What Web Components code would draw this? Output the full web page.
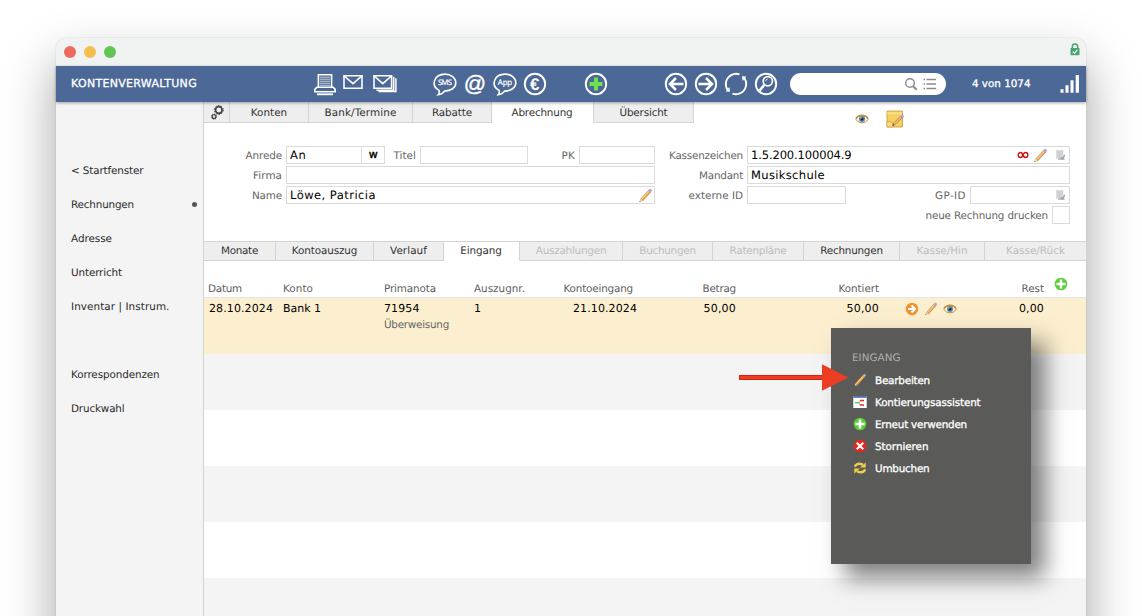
<!DOCTYPE html>
<html lang="de">
<head>
<meta charset="utf-8">
<title>Kontenverwaltung</title>
<style>
  html, body { margin: 0; height: 616px; overflow: hidden; background: #fff; }
  body { position: relative; font-family: "DejaVu Sans", Verdana, sans-serif; font-size: 10.4px; color: #333; text-rendering: geometricPrecision; }
  app-window { margin: 38px 56px 0; }
</style>
</head>
<body>
<app-window>
  <tool-bar slot="toolbar"></tool-bar>
  <side-nav slot="nav"></side-nav>
  <tab-strip kind="top">
    <tab-item w="25"><ui-icon name="gears" width="16" height="16"></ui-icon></tab-item>
    <tab-item w="78"><fit-text w="36.5">Konten</fit-text></tab-item>
    <tab-item w="103"><fit-text w="72">Bank/Termine</fit-text></tab-item>
    <tab-item w="78"><fit-text w="40">Rabatte</fit-text></tab-item>
    <tab-item w="101" active><fit-text w="61">Abrechnung</fit-text></tab-item>
    <tab-item w="99"><fit-text w="48">Übersicht</fit-text></tab-item>
  </tab-strip>
  <account-form></account-form>
  <tab-strip kind="sub">
    <tab-item w="71"><fit-text w="37">Monate</fit-text></tab-item>
    <tab-item w="97"><fit-text w="65.5">Kontoauszug</fit-text></tab-item>
    <tab-item w="69"><fit-text w="37">Verlauf</fit-text></tab-item>
    <tab-item w="75" active><fit-text w="41.5">Eingang</fit-text></tab-item>
    <tab-item w="102" disabled><fit-text w="70.5">Auszahlungen</fit-text></tab-item>
    <tab-item w="89" disabled><fit-text w="56.5">Buchungen</fit-text></tab-item>
    <tab-item w="90" disabled><fit-text w="57">Ratenpläne</fit-text></tab-item>
    <tab-item w="95"><fit-text w="62.5">Rechnungen</fit-text></tab-item>
    <tab-item w="84" disabled><fit-text w="51">Kasse/Hin</fit-text></tab-item>
    <tab-item w="101" disabled><fit-text w="59">Kasse/Rück</fit-text></tab-item>
  </tab-strip>
  <payment-table></payment-table>
</app-window>
<context-menu></context-menu>
<pointer-arrow></pointer-arrow>

<script>
const PENCIL = `
  <path d="M2.6 11.2 10.6 2.4l2 1.8-8 8.8z" fill="#f0a850" stroke="#a87838" stroke-width=".6"/>
  <path d="M3.6 11.4 11.2 3" stroke="#ffdc9c" stroke-width=".9"/>
  <path d="M10.4 2.6 11.8 1q1.6-.2 2.1 1.6l-1.4 1.8z" fill="#c9a6cf" stroke="#9b86a8" stroke-width=".4"/>
  <path d="M2.6 11.2 1.4 14l3.2-1z" fill="#e8cfa0"/><path d="m1.4 14 .4-1.2.9.8z" fill="#443"/>`;

const BUBBLE = `<path d="M6 18.4C-2.6 13.4 1 2.2 12 2.1c6 0 10.8 3.6 10.8 8.6S18 19 11.6 19.1c-1.4 2-3.6 3.4-6.4 3.7 1.2-1.4 1.4-3 .8-4.4z" fill="none" stroke="#fff" stroke-width="1.6"/>`;

// every icon carries its own viewBox and drawing
const ICONS = {
  printer: ['0 0 24 24', `<g fill="none" stroke="#fff" stroke-width="1.6">
    <path d="M5.4 15V2.8h13.2V15"/><path d="M3.8 15.2h16.4l2 2.2v2.4H1.8v-2.4z" fill="#4c6896"/>
    <path d="M4 22.3h16" stroke-width="1.8"/><path d="M7 5.3h10M7 7.3h10M7 9.3h10M7 11.3h10M7 13.3h10" stroke-width="1.1" opacity=".65"/></g>`],
  mail: ['0 0 20 24', `<g fill="none" stroke="#fff" stroke-width="1.6"><path d="M1 3.7h18v12.6H1z"/><path d="m1.2 4 8.8 7.600L18.800 4"/></g>`],
  mails: ['0 0 24 24', `<g fill="none" stroke="#fff" stroke-width="1.6"><path d="M1 3.7h17.600v12.600H1z"/><path d="m1.200 4 8.600 7.600L18.400 4"/>
    <path d="M20.700 4.800v13.400H3.500M22.900 6.200v13.400H5.500" stroke-width="1.500"/></g>`],
  sms: ['0 0 24 24', `${BUBBLE}
    <text x="12" y="13.300" font-family="Open Sans" font-size="7.600" textLength="14" stroke="#fff" stroke-width=".2" fill="#fff" text-anchor="middle">SMS</text>`],
  at: ['0 0 24 24', `<text x="12" y="18.600" font-family="Liberation Sans" font-size="22" fill="#fff" stroke="#fff" stroke-width=".4" text-anchor="middle">@</text>`],
  app: ['0 0 24 24', `${BUBBLE}
    <text x="12" y="13" font-family="Open Sans" font-size="8" textLength="14.500" stroke="#fff" stroke-width=".2" fill="#fff" text-anchor="middle">App</text>`],
  euro: ['0 0 24 24', `<circle cx="12" cy="12" r="10.200" fill="none" stroke="#fff" stroke-width="1.900"/>
    <text x="11.700" y="18" font-family="Liberation Sans" font-weight="bold" font-size="17" fill="#fff" text-anchor="middle">€</text>`],
  add: ['0 0 24 24', `<circle cx="12" cy="12" r="10.200" fill="none" stroke="#fff" stroke-width="1.900"/><path d="M12 5.500v13M5.500 12h13" stroke="#6ee04c" stroke-width="4"/>`],
  back: ['0 0 24 24', `<g fill="none" stroke="#fff"><circle cx="12" cy="12" r="10.200" stroke-width="1.900"/><path d="M19.500 12H5.500m6.500-6-6 6 6 6" stroke-width="2.500"/></g>`],
  forward: ['0 0 24 24', `<g fill="none" stroke="#fff"><circle cx="12" cy="12" r="10.200" stroke-width="1.900"/><path d="M4.500 12h14m-6.500-6 6 6-6 6" stroke-width="2.500"/></g>`],
  reload: ['0 0 24 24', `<g fill="none" stroke="#fff" stroke-width="1.900"><path d="M3.800 18A10.200 10.200 0 0 1 9 2.300M8.500 21.600a10.200 10.200 0 0 0 7 0M20.200 6A10.200 10.200 0 0 1 15 21.700M15.500 2.400a10.200 10.200 0 0 0-7 0"/></g>
    <path d="M1.600 19.600 6 19.800 5.400 15zM22.400 4.400 18 4.200 18.600 9z" fill="#fff"/>`],
  find: ['0 0 24 24', `<g fill="none" stroke="#fff"><circle cx="12" cy="12" r="10.200" stroke-width="1.900"/><circle cx="13.800" cy="9.200" r="4.600" stroke-width="1.700"/><path d="m10.600 12.500-5 6" stroke-width="2.600"/><path d="M11.600 9.200q.2-2 2.200-2.200" stroke-width=".8"/></g>`],
  lens: ['0 0 14 14', `<g fill="none" stroke="#8c8c8c"><circle cx="6" cy="6" r="4.300" stroke-width="1.500"/><path d="m9.100 9.200 3.600 3.600" stroke-width="2"/></g>`],
  list: ['0 0 14 12', `<path d="M3.500 1.500H13M3.500 6H13M3.500 10.500H13M.5 1.500h1.600M.5 6h1.600M.5 10.500h1.600" stroke="#8c8c8c" stroke-width="1.400"/>`],
  signal: ['0 0 20 20', `<path d="M.5 15.300h3v3.500h-3zM5.500 11.300h3v7.500h-3zM10.500 6.300h3v12.500h-3zM15.700 1h3.200v17.800h-3.200z" fill="#fff"/>`],
  lock: ['0 0 10 13', `<path d="M2.300 6V3.800a2.700 2.700 0 0 1 5.400 0V6" fill="none" stroke="#4aa674" stroke-width="1.500"/><rect x=".5" y="5" width="9" height="7.300" rx=".6" fill="#4aa674"/><path d="m2.700 8.700 1.700 1.600 3-3.500" fill="none" stroke="#fff" stroke-width="1.100"/>`],
  gears: ['0 0 16 16', `<g fill="none" stroke="#444"><circle cx="9.800" cy="6" r="3.300" stroke-width="1.700"/><circle cx="9.800" cy="6" r="4.500" stroke-width="1" stroke-dasharray="1.500 1.330"/>
    <circle cx="5" cy="12.600" r="1.900" stroke-width="1.300"/><circle cx="5" cy="12.600" r="2.700" stroke-width=".7" stroke-dasharray="1 1.120"/></g>`],
  pencil: ['0 0 15 15', PENCIL],
  eye: ['0 0 14 10', `<path d="M.7 5.300Q3 1.700 7 1.700t6.300 3.600Q11 8.900 7 8.900T.7 5.300z" fill="#f4f1e4" stroke="#b3873c" stroke-width=".9"/><path d="M.8 4.600Q3 1.200 7 1.200t6.200 3.400" fill="none" stroke="#c28d35" stroke-width="1.300"/>
    <circle cx="7" cy="5.100" r="3" fill="#5d87a5"/><circle cx="7" cy="5.100" r="1.500" fill="#152330"/><circle cx="6" cy="4" r=".7" fill="#dcecf6"/>`],
  note: ['0 0 18 18', `<path d="M1 1h15.500v16H1z" fill="#f6cf5c" stroke="#c39b45" stroke-width=".8"/><path d="M1.500 2h14.500v2.500H1.500z" fill="#fadc82"/><path d="M1 11.500q3.500-.5 5 1T7 17H1z" fill="#f9dd83" stroke="#cf9c3a" stroke-width=".7"/>
    <path d="m7.500 14.600 7.800-7.400" stroke="#9c6a32" stroke-width="2.400"/><path d="m7.700 14.300 7.500-7.100" stroke="#f1b878" stroke-width="1.600"/><path d="m15 7.500 2.300-2" stroke="#a99ac8" stroke-width="2.500"/><path d="m6 16 2.500-.8-1.500-1.600z" fill="#7a5130"/>`],
  infinity: ['0 0 12 8', `<g fill="none" stroke="#c4161c" stroke-width="1.400"><ellipse cx="3.400" cy="4" rx="2.200" ry="2.500"/><ellipse cx="8.600" cy="4" rx="2.200" ry="2.500"/></g>`],
  record: ['0 0 11 12', `<path d="M1 .8h7.500v9H1z" fill="#dedede"/><path d="M1.800 3h6M1.800 5h6M1.800 7h6" stroke="#c2c2c2"/><path d="M3 8.400h6.500V11H3z" fill="#c0c3c6"/><path d="m6 8.600 1.500 1.400 2.400-4.200" fill="none" stroke="#8fa2b6" stroke-width="1.300"/>`],
  go: ['0 0 14 14', `<circle cx="7" cy="7" r="6.200" fill="#ee9330"/><path d="M3 7h6.500M6.500 3.500 10 7l-3.500 3.500" fill="none" stroke="#fff" stroke-width="2.100"/>`],
  plus: ['0 0 14 14', `<circle cx="7" cy="7" r="6.300" fill="#58cf35"/><path d="M7 2.500v9M2.500 7h9" stroke="#fff" stroke-width="2.500"/>`],
  assist: ['0 0 14 14', `<path d="M.3 1h13.400v12H.3z" fill="#fff"/><path d="M.3 1h13.400v1.900H.3z" fill="#4e76b5"/><path d="M2 7.700h4" stroke="#37d13b" stroke-width="1.300"/><path d="M7 5.600h4M7 9.900h4" stroke="#e82323" stroke-width="1.500"/><path d="M6.500 5.600v4.400" stroke="#e82323" stroke-width=".4"/>`],
  cancel: ['0 0 14 14', `<circle cx="7" cy="7" r="6.400" fill="#e5281f"/><path d="m3.800 3.800 6.400 6.400m0-6.400-6.400 6.400" stroke="#fff" stroke-width="2.100"/>`],
  rebook: ['0 0 14 14', `<g fill="none" stroke="#ecd04c" stroke-width="2.400"><path d="M1.700 5.600Q4.500 .8 10 3.800"/><path d="M12.300 8.400Q9.500 13.200 4 10.200"/></g><path d="M12.700 1.400v5.200H7zM1.300 12.600V7.400H7z" fill="#ecd04c"/>`]
};

class UiIcon extends HTMLElement {
  connectedCallback() {
    if (this.shadowRoot) return;
    const [box, drawing] = ICONS[this.getAttribute('name')];
    const w = this.getAttribute('width');
    const h = this.getAttribute('height') || w;
    this.attachShadow({mode: 'open'}).innerHTML = `
      <style>:host { display: block; flex: none; width: ${w}px; height: ${h}px; } svg { display: block; }</style>
      <svg width="${w}" height="${h}" viewBox="${box}">${drawing}</svg>`;
  }
}

// one line of text, tracked so that it fills the width in its "w" attribute
// --drop lowers the text inside its 14px line
class FitText extends HTMLElement {
  connectedCallback() {
    if (this.shadowRoot) return;
    this.attachShadow({mode: 'open'}).innerHTML = `
      <style>:host { display: inline-block; flex: none; white-space: nowrap;
        padding-top: var(--drop, 2px); line-height: calc(14px - var(--drop, 2px)); }</style>
      <slot></slot>`;
    const want = parseFloat(this.getAttribute('w'));
    const have = this.getBoundingClientRect().width;
    if (want && have) {
      this.style.letterSpacing = (want - have) / this.textContent.length + 'px';
    }
  }
}

class AppWindow extends HTMLElement {
  constructor() {
    super();
    this.attachShadow({mode: 'open'}).innerHTML = `
      <style>
        :host { display: flex; flex-direction: column; height: 640px; background: #fff; border-radius: 10px 10px 0 0;
          box-shadow: 0 0 1px rgba(0,0,0,.35), 0 24px 50px rgba(0,0,0,.37); }
        header { display: flex; align-items: center; height: 28px; flex: none; padding: 0 6px 0 8px;
          box-sizing: border-box; border-radius: 10px 10px 0 0; background: #f1f3f2; gap: 8px; }
        i { width: 12px; height: 12px; border-radius: 50%; }
        ui-icon { margin: -5px 0 0 auto; }
        .body { display: flex; flex: 1; }
        main { flex: 1; min-width: 0; }
      </style>
      <header>
        <i style="background:#ed6a5e"></i><i style="background:#f5bf4f"></i><i style="background:#61c554"></i>
        <ui-icon name="lock" width="10" height="13"></ui-icon>
      </header>
      <slot name="toolbar"></slot>
      <div class="body"><slot name="nav"></slot><main><slot></slot></main></div>`;
  }
}

class ToolBar extends HTMLElement {
  constructor() {
    super();
    const group = (left, names) => `<div class="group" style="margin-left:${left}px">` +
      names.map(n => `<ui-icon name="${n}" width="24"></ui-icon>`).join('') + '</div>';
    this.attachShadow({mode: 'open'}).innerHTML = `
      <style>
        :host { display: flex; align-items: center; height: 36px; flex: none; padding: 0 6px 0 15px; position: relative;
          background: #4c6896; color: #fff; box-shadow: 0 1px 3px rgba(0,0,0,.35); -webkit-text-stroke: .3px #fff; --drop: 0px; }
        .group { display: flex; gap: 6px; -webkit-text-stroke: 0; }
        .search { display: flex; align-items: center; justify-content: flex-end; width: 156px; height: 22px; margin: 0 26px 0 12px;
          padding-right: 9px; gap: 5px; box-sizing: border-box; border-radius: 11px; background: #fff; }
        .title { width: 242px; font-size: 11px; }
      </style>
      <div class="title"><fit-text w="126">KONTENVERWALTUNG</fit-text></div>
      <ui-icon name="printer" width="24"></ui-icon>
      <ui-icon name="mail" width="20" height="24" style="margin-left:6px"></ui-icon>
      <ui-icon name="mails" width="24" style="margin-left:10px"></ui-icon>
      ${group(36, ['sms', 'at', 'app', 'euro'])}
      ${group(37, ['add'])}
      ${group(56, ['back', 'forward', 'reload', 'find'])}
      <div class="search"><ui-icon name="lens" width="14"></ui-icon><ui-icon name="list" width="14" height="12"></ui-icon></div>
      <fit-text w="58.5">4 von 1074</fit-text>
      <ui-icon name="signal" width="20" style="margin-left:auto"></ui-icon>`;
  }
}

class SideNav extends HTMLElement {
  constructor() {
    super();
    const links = [['&lt; Startfenster', 72.5], ['Rechnungen', 63], ['Adresse', 41], ['Unterricht', 51],
      ['Inventar | Instrum.', 98.5], null, ['Korrespondenzen', 88.5], ['Druckwahl', 53.5]];
    this.attachShadow({mode: 'open'}).innerHTML = `
      <style>
        :host { display: block; width: 147px; flex: none; padding-top: 51px; background: #f4f4f4; border-right: 1px solid #d2d2d2; color: #2c2c2c; }
        div { display: flex; align-items: center; justify-content: space-between; height: 34px; padding: 0 6px 0 15px; }
        i { width: 5px; height: 5px; border-radius: 50%; background: #555; }
      </style>` + links.map((l, n) => l
        ? `<div><fit-text w="${l[1]}">${l[0]}</fit-text>${n == 1 ? '<i></i>' : ''}</div>`
        : '<div></div>').join('');
  }
}

class TabStrip extends HTMLElement {
  constructor() {
    super();
    this.attachShadow({mode: 'open'}).innerHTML = `
      <style>
        :host { display: flex; box-sizing: border-box; }
        :host([kind=top]) { height: 21px; }
        :host([kind=sub]) { height: 20px; border-top: 1px solid #d4d4d4; --drop: 0px; }
      </style>
      <slot></slot>`;
  }
}

class TabItem extends HTMLElement {
  connectedCallback() {
    if (this.shadowRoot) return;
    this.attachShadow({mode: 'open'}).innerHTML = `
      <style>
        :host { display: flex; align-items: center; justify-content: center; flex: none; width: ${this.getAttribute('w')}px;
          background: #eee; border-right: 1px solid #d4d4d4; border-bottom: 1px solid #d4d4d4; }
        :host([active]) { width: ${this.getAttribute('w') - 1}px; background: #fff; border-bottom-color: transparent; padding-right: 1px; }
        :host([disabled]) { color: #bdbdbd; }
      </style>
      <slot></slot>`;
  }
}

class FormField extends HTMLElement {
  connectedCallback() {
    if (this.shadowRoot) return;
    const label = this.getAttribute('label');
    this.attachShadow({mode: 'open'}).innerHTML = `
      <style>
        :host { display: flex; align-items: center; flex: none; height: 18px; color: #666; }
        label { display: flex; justify-content: flex-end; flex: none; box-sizing: border-box;
          width: ${this.getAttribute('lead')}px; padding-right: 4px; }
        div { display: flex; align-items: center; box-sizing: border-box; flex: none; width: ${this.getAttribute('box')}px; height: 18px;
          padding: 0 2px 0 3px; border: 1px solid #dadada; background: #fff; color: #000; font-size: 11.5px; }
      </style>
      ${label ? `<label><fit-text w="${this.getAttribute('lw')}">${label}</fit-text></label>` : ''}
      <div><slot></slot></div>`;
  }
}

class AccountForm extends HTMLElement {
  constructor() {
    super();
    this.attachShadow({mode: 'open'}).innerHTML = `
      <style>
        :host { display: flex; flex-direction: column; height: 118px; box-sizing: border-box; }
        .marks { display: flex; align-items: center; height: 23px; padding-left: 651px; gap: 17px; }
        .marks ui-icon { margin-top: -31px; }
        .row { display: flex; height: 20px; }
        .push { margin-left: auto; }
        .more { margin-left: -1px; }
        form-field > fit-text { --drop: 0px; }
      </style>
      <div class="marks"><ui-icon name="eye" width="14" height="10"></ui-icon><ui-icon name="note" width="18"></ui-icon></div>
      <div class="row">
        <form-field label="Anrede" lw="36.5" lead="82" box="76"><fit-text w="16.5">An</fit-text></form-field>
        <form-field class="more" box="24"><fit-text style="margin:auto;font-size:11px;-webkit-text-stroke:.4px #000" w="9.5">w</fit-text></form-field>
        <form-field label="Titel" lw="22.5" lead="35" box="108"></form-field>
        <form-field label="PK" lw="13.5" lead="51" box="76"></form-field>
        <form-field label="Kassenzeichen" lw="74" lead="92" box="323">
          <fit-text w="100.5">1.5.200.100004.9</fit-text>
          <ui-icon class="push" name="infinity" width="12" height="8"></ui-icon>
          <ui-icon style="margin-left:4px" name="pencil" width="15"></ui-icon>
          <ui-icon style="margin:0 1px 0 7px" name="record" width="11" height="12"></ui-icon>
        </form-field>
      </div>
      <div class="row">
        <form-field label="Firma" lw="29" lead="82" box="369"></form-field>
        <form-field label="Mandant" lw="44" lead="92" box="323"><fit-text w="74">Musikschule</fit-text></form-field>
      </div>
      <div class="row">
        <form-field label="Name" lw="30" lead="82" box="369"><fit-text w="86">Löwe, Patricia</fit-text><ui-icon class="push" style="margin-right:-1px" name="pencil" width="15"></ui-icon></form-field>
        <form-field label="externe ID" lw="54.5" lead="92" box="99"></form-field>
        <form-field label="GP-ID" lw="31" lead="124" box="100"><ui-icon class="push" style="margin-right:1px" name="record" width="11" height="12"></ui-icon></form-field>
      </div>
      <div class="row"><form-field label="neue Rechnung drucken" lw="122.5" lead="848" box="18"></form-field></div>`;
  }
}

class PaymentTable extends HTMLElement {
  constructor() {
    super();
    this.attachShadow({mode: 'open'}).innerHTML = `
      <style>
        :host { display: block; }
        .row { display: grid; grid-template-columns: 75px 101px 90px 60px 103px 99px 143px 81px 84px 42px; height: 56px; padding-left: 4px; box-sizing: border-box; }
        .head { height: 37px; padding-top: 20px; color: #606060; border-bottom: 1px solid #e4e4e4; }
        .entry { background: #fcefcf; color: #000; font-size: 11px; padding-top: 4px; --drop: 0px; }
        .stripe:nth-of-type(odd) { background: #f4f4f4; }
        .r { text-align: right; }
        .acts { display: flex; gap: 5px; padding-left: 26px; align-items: center; height: 13px; }
        .sub { display: block; margin-top: 2px; font-size: 10.4px; color: #666; }
      </style>
      <div class="row head">
        <span><fit-text w="34">Datum</fit-text></span><span><fit-text w="30">Konto</fit-text></span>
        <span><fit-text w="52">Primanota</fit-text></span><span><fit-text w="51">Auszugnr.</fit-text></span>
        <span class="r" style="padding-right:4px"><fit-text w="69.5">Kontoeingang</fit-text></span>
        <span class="r"><fit-text w="33.5">Betrag</fit-text></span><span class="r"><fit-text w="40.5">Kontiert</fit-text></span><span></span>
        <span class="r"><fit-text w="22.5">Rest</fit-text></span>
        <ui-icon name="plus" width="14" style="margin:-4px 0 0 10px"></ui-icon>
      </div>
      <div class="row entry">
        <span style="padding-left:1px"><fit-text w="64">28.10.2024</fit-text></span><span><fit-text w="38">Bank 1</fit-text></span>
        <span><fit-text w="35.5">71954</fit-text><span class="sub"><fit-text w="65">Überweisung</fit-text></span></span>
        <span><fit-text>1</fit-text></span><span class="r"><fit-text w="64">21.10.2024</fit-text></span>
        <span class="r"><fit-text w="32.5">50,00</fit-text></span><span class="r"><fit-text w="32.5">50,00</fit-text></span>
        <div class="acts"><ui-icon name="go" width="14"></ui-icon><ui-icon name="pencil" width="14"></ui-icon><ui-icon name="eye" width="14" height="10"></ui-icon></div>
        <span class="r"><fit-text w="25">0,00</fit-text></span>
      </div>
      ${'<div class="row stripe"></div>'.repeat(5)}`;
  }
}

class ContextMenu extends HTMLElement {
  constructor() {
    super();
    const items = [['pencil', 'Bearbeiten', 55], ['assist', 'Kontierungsassistent', 105.5], ['plus', 'Erneut verwenden', 92],
      ['cancel', 'Stornieren', 53.5], ['rebook', 'Umbuchen', 54.5]];
    this.attachShadow({mode: 'open'}).innerHTML = `
      <style>
        :host { display: block; position: absolute; left: 831px; top: 328px; width: 200px; height: 236px; padding: 22px 0 0 21px;
          box-sizing: border-box; background: #5a5a59; color: #fff; box-shadow: 14px 14px 22px rgba(0,0,0,.5); }
        .heading { height: 19px; color: #adadad; }
        .item { display: flex; align-items: center; gap: 8px; height: 22px; padding-left: 1px; -webkit-text-stroke: .3px #fff; }
        .item ui-icon { -webkit-text-stroke: 0; margin-top: -1px; }
      </style>
      <div class="heading"><fit-text w="48.5">EINGANG</fit-text></div>` +
      items.map(([icon, text, w]) => `<div class="item"><ui-icon name="${icon}" width="14"></ui-icon><fit-text w="${w}">${text}</fit-text></div>`).join('');
  }
}

class PointerArrow extends HTMLElement {
  constructor() {
    super();
    this.attachShadow({mode: 'open'}).innerHTML = `
      <style>:host { display: block; position: absolute; left: 738px; top: 363px; } svg { display: block; }</style>
      <svg width="112" height="30" viewBox="0 0 112 30">
        <path d="M1 12h84v5H1z" fill="#d8200f"/><path d="M2 13h84v3H2z" fill="#ea3d23"/><path d="M84 1.200 110.500 14.500 84 27.800z" fill="#ea3d23"/>
      </svg>`;
  }
}

customElements.define('app-window', AppWindow);
customElements.define('tool-bar', ToolBar);
customElements.define('side-nav', SideNav);
customElements.define('tab-strip', TabStrip);
customElements.define('tab-item', TabItem);
customElements.define('account-form', AccountForm);
customElements.define('form-field', FormField);
customElements.define('payment-table', PaymentTable);
customElements.define('context-menu', ContextMenu);
customElements.define('pointer-arrow', PointerArrow);
customElements.define('ui-icon', UiIcon);
customElements.define('fit-text', FitText);
</script>
</body>
</html>
